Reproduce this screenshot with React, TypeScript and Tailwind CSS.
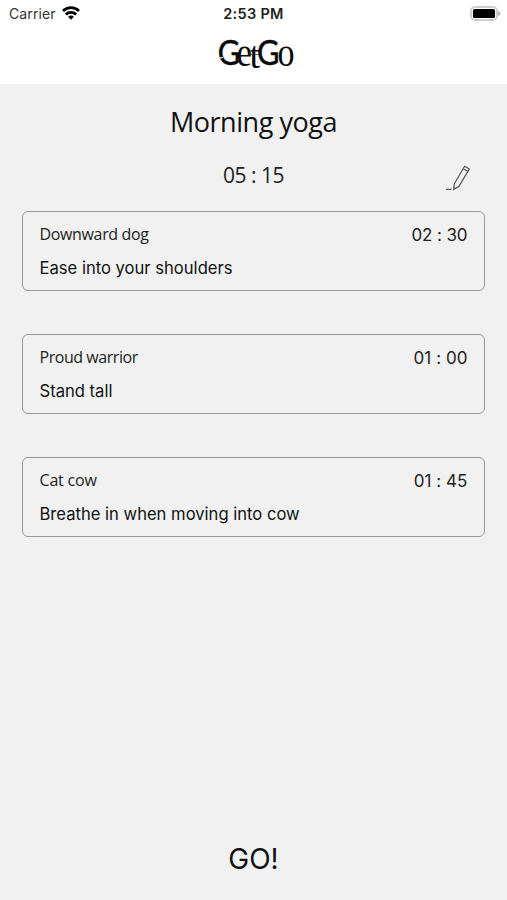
const steps = [
  { name: 'Downward dog', time: '02 : 30', note: 'Ease into your shoulders', nameClass: 'tracking-[-0.35px]', timeClass: 'tracking-[-0.1px]' },
  { name: 'Proud warrior', time: '01 : 00', note: 'Stand tall', nameClass: 'tracking-[-0.45px]', timeClass: 'tracking-[0.05px]' },
  { name: 'Cat cow', time: '01 : 45', note: 'Breathe in when moving into cow', nameClass: 'tracking-[-0.2px]', timeClass: 'tracking-[0.05px]' },
];

function WifiIcon() {
  return (
    <svg width="18" height="14" viewBox="0 0 18 14" fill="none" stroke="#000" strokeWidth="2.8">
      <path d="M1 4.9C5.5.6 12.5.6 17 4.9" />
      <path d="M3.8 8.4c2.8-2.7 7.6-2.7 10.4 0" />
      <path d="M6.1 10.8c1.6-1.6 4.2-1.6 5.8 0L9 13.8z" fill="#000" stroke="none" />
    </svg>
  );
}

function BatteryIcon() {
  return (
    <svg width="32" height="16" viewBox="0 0 32 16">
      <rect x="2" y="1" width="26" height="13" rx="4" fill="#fff" stroke="#cfcfcf" strokeWidth="2" />
      <rect x="4" y="3" width="22" height="9" rx="1.5" fill="#000" />
      <path d="M29.2 5.2c1.6.4 2.2 1.2 2.2 2.3s-.6 1.9-2.2 2.3z" fill="#aaa" />
    </svg>
  );
}

function Logo() {
  return (
    <svg width="80" height="44" viewBox="0 0 80 44" fill="#0a0a0a" overflow="visible">
      <g fontFamily="Lato, sans-serif" fontSize="34.5">
        <text x="1.8" y="29.4" textLength="22.5" lengthAdjust="spacingAndGlyphs" stroke="#0a0a0a" strokeWidth="0.5">G</text>
        <text x="41" y="29.4" textLength="22.5" lengthAdjust="spacingAndGlyphs" stroke="#0a0a0a" strokeWidth="0.5">G</text>
      </g>
      <g fontFamily="'Liberation Serif', serif">
        <text x="20.5" y="29.6" fontSize="39" textLength="15.5" lengthAdjust="spacingAndGlyphs">e</text>
        <text x="33.5" y="32.4" fontSize="37" textLength="10.5" lengthAdjust="spacingAndGlyphs">t</text>
        <text x="61.6" y="29.6" fontSize="41" textLength="17" lengthAdjust="spacingAndGlyphs">o</text>
      </g>
      <path d="M1 22.5l6-1" stroke="#fff" />
      <path d="M33 18.5h11" stroke="#222" strokeWidth="0.7" />
    </svg>
  );
}

function PencilIcon() {
  return (
    <svg width="26" height="26" viewBox="0 0 26 26" fill="none" stroke="#555" strokeWidth="1.2" strokeLinejoin="round">
      <path d="M19.6 1.2l4.8 2.7-10.6 17.7-5.1 3 .5-5.6z" />
      <path d="M18.2 3.8l4.7 2.8M8.9 22.5l1.6 1" />
      <path d="M1 24.3h5.5" />
    </svg>
  );
}

export default function App() {
  return (
    <div className="flex h-[900px] w-[507px] flex-col bg-[#f1f1f1] font-['Inter',sans-serif] text-[#111]">
      <header className="h-[84px] bg-white">
        <div className="grid h-[26px] grid-cols-3 items-center pl-[9px] pr-[6px] text-[14px]">
          <div className="flex items-center gap-[6px] tracking-[0.1px] text-[#333]">
            Carrier <WifiIcon />
          </div>
          <span className="-ml-[3px] pt-[2px] text-center text-[14.5px] font-semibold tracking-[0.3px] text-[#222]">2:53 PM</span>
          <div className="flex justify-end pt-px"><BatteryIcon /></div>
        </div>
        <div className="flex justify-center pl-[5px] pt-[10px]"><Logo /></div>
      </header>

      <main className="flex flex-1 flex-col px-[22px]">
        <h1 className="mt-[19px] text-center font-['Open_Sans',sans-serif] text-[27px] leading-[38px] tracking-[-0.45px]">Morning yoga</h1>
        <div className="mt-[17px] grid h-[53px] grid-cols-3">
          <span className="col-start-2 text-center font-['Open_Sans',sans-serif] text-[21px] leading-[34px] tracking-[-0.5px] text-[#222]">05 : 15</span>
          <button className="flex items-start justify-end pr-[14px] pt-[7px]" aria-label="Edit"><PencilIcon /></button>
        </div>

        <div className="flex flex-col gap-[43px]">
          {steps.map((step) => (
            <section key={step.name} className="h-20 rounded-[6px] border border-[#999] px-[16.5px] pt-[10px]">
              <div className="flex justify-between leading-6">
                <h2 className={`font-['Open_Sans',sans-serif] text-[16px] text-[#222] ${step.nameClass}`}>{step.name}</h2>
                <span className={`pt-px text-[17px] text-[#222] ${step.timeClass}`}>{step.time}</span>
              </div>
              <p className="mt-[9px] text-[16.6px] leading-6">{step.note}</p>
            </section>
          ))}
        </div>

        <button className="mb-[20px] mt-auto text-[28px] leading-[42px]">GO!</button>
      </main>
    </div>
  );
}
